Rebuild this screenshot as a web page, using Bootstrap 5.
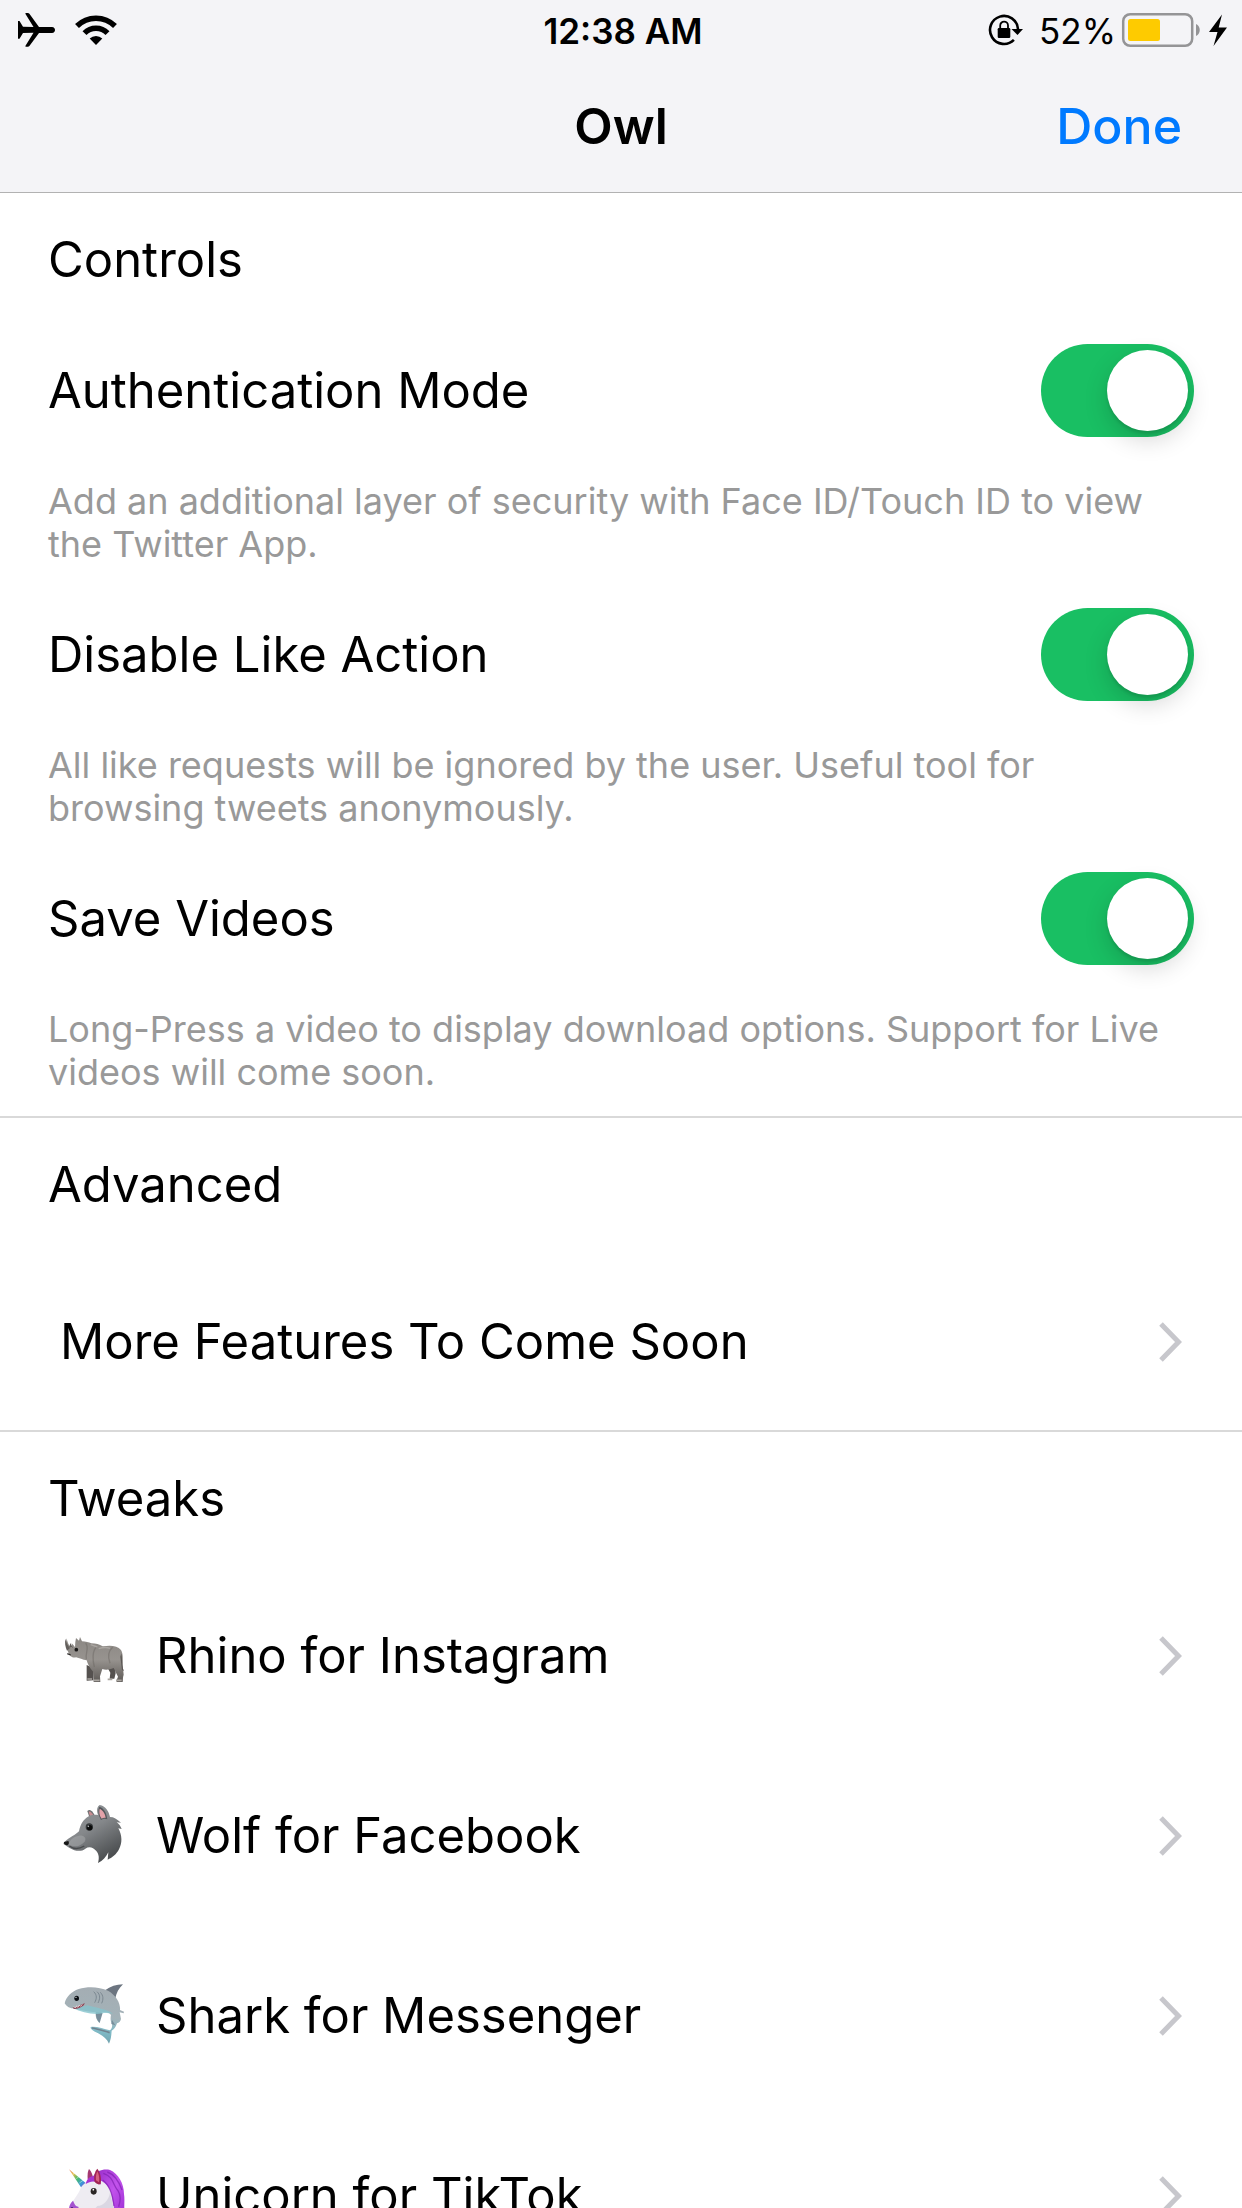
<!DOCTYPE html>
<html lang="en">
<head>
<meta charset="utf-8">
<meta name="viewport" content="width=device-width, initial-scale=1">
<title>Owl</title>
<link href="https://cdn.jsdelivr.net/npm/bootstrap@5.3.0/dist/css/bootstrap.min.css" rel="stylesheet">
<style>
  body { font-family: Inter, "Liberation Sans", sans-serif; font-size: 49px; line-height: 60px; color: #000; background: #fff; }
  svg { display: block; flex: none; }
  .top-area { background: #f4f4f7; border-bottom: 1px solid #b2b2b2; }
  .equal-side { flex: 1 1 0; }
  .status-line { padding: 0 14px 0 18px; font-size: 35px; line-height: 62px; }
  .status-time { font-weight: 600; }
  .title-line { padding: 34px 60px 36px; }
  .title-line h1, .done-btn { font-size: 50px; line-height: 60px; font-weight: 600; }
  .done-btn { font-weight: 500; color: #007aff; }
  .scroller { min-height: 0; overflow-y: auto; scrollbar-width: none; }
  .scroller::-webkit-scrollbar { display: none; }
  .group { box-shadow: inset 0 -2px #d9d9d9; }
  .group:last-child { box-shadow: none; }
  .group-title { margin: 0; font-size: 49px; line-height: 60px; font-weight: 400; padding: 37px 48px; }
  .settings { padding: 17px 48px 24px; gap: 42px; }
  .setting-note { font-size: 36px; line-height: 43px; color: #999; margin-top: 43px; }
  .form-check-input.toggle { width: 153px; height: 93px; margin: 0; border: 0; border-radius: 47px; background: #19bf63; position: relative; }
  .toggle::after { content: ""; position: absolute; top: 6px; right: 6px; width: 81px; height: 81px; border-radius: 50%; background: #fff; box-shadow: 0 9px 24px rgba(0,0,0,.16), 0 3px 3px rgba(0,0,0,.1); }
  .form-check-input.toggle:not(:checked) { background: #e5e5ea; }
  .toggle:not(:checked)::after { right: 66px; }
  .nav-row { min-height: 180px; padding: 0 60px; gap: 28px; color: #000; text-decoration: none; }
</style>
</head>
<body class="vh-100 d-flex flex-column overflow-hidden">
<svg width="0" height="0" class="position-absolute" aria-hidden="true">
  <defs>
    <symbol id="chevron" viewBox="0 0 24 40"><path d="M3 2l17.500 18L3 38" fill="none" stroke="#c7c7cc" stroke-width="5"/></symbol>
    <linearGradient id="rhinoSkin" x1="0" y1="0" x2="0" y2="1"><stop offset="0" stop-color="#8b8783"/><stop offset=".5" stop-color="#97938f"/><stop offset="1" stop-color="#5e5a57"/></linearGradient>
    <linearGradient id="wolfFur" x1="0" y1="0" x2=".6" y2="1"><stop offset="0" stop-color="#94979a"/><stop offset=".5" stop-color="#85888b"/><stop offset="1" stop-color="#4c4f51"/></linearGradient>
    <linearGradient id="sharkSkin" x1=".4" y1="0" x2=".3" y2="1"><stop offset="0" stop-color="#a4adb3"/><stop offset=".5" stop-color="#a3b2b8"/><stop offset=".75" stop-color="#80bbc7"/><stop offset="1" stop-color="#6e9ca8"/></linearGradient>
    <linearGradient id="mane" x1="0" y1="0" x2="1" y2="1"><stop offset="0" stop-color="#9328c5"/><stop offset=".5" stop-color="#c253ec"/><stop offset="1" stop-color="#9527cf"/></linearGradient>
    <linearGradient id="horn" x1="0" y1="0" x2="1" y2="1"><stop offset="0" stop-color="#f0775a"/><stop offset=".25" stop-color="#e7c04d"/><stop offset=".5" stop-color="#45b96b"/><stop offset=".75" stop-color="#3a9bd8"/><stop offset="1" stop-color="#8b3fd0"/></linearGradient>
  </defs>
</svg>

<header class="top-area flex-shrink-0">
  <div class="status-line d-flex align-items-start">
    <div class="equal-side d-flex gap-3">
      <svg width="40" height="60" viewBox="0 0 40 60" aria-label="Airplane mode" role="img"><path d="M0 21h1.500L5 26.800l10.500.3L7.500 14c-.3-.7 0-1 .8-1h1.500c.7 0 1.200.300 1.600.8L21 26.900h13c4 0 4 6 0 6H21L11.400 46c-.4.600-.9.800-1.600.800H8.300c-.8 0-1.100-.4-.8-1l8-13-10.500.2L1.500 38.700H0z"/></svg>
      <svg width="44" height="60" viewBox="68 0 44 60" aria-label="Wi-Fi" role="img"><g fill="none" stroke="#000" stroke-width="5.500"><path d="M71 26a27 27 0 0 1 38 0"/><path d="M78.500 33.200a16 16 0 0 1 23 0"/><path d="M83.700 38.500a9 9 0 0 1 12.600 0L90 45z" fill="#000" stroke="none"/></g></svg>
    </div>
    <div class="status-time">12:38 AM</div>
    <div class="equal-side d-flex justify-content-end">
      <svg width="36" height="60" viewBox="984 0 36 60" aria-label="Rotation lock" role="img"><path d="M1010.900 39.900A14 14 0 1 1 1015 29" fill="none" stroke="#000" stroke-width="2.600"/><path d="M1008.500 29h11.500l-5.500 6z"/><rect x="994.700" y="28" width="12.600" height="10" rx="1.200"/><path d="M997.200 29v-3.500a3.900 3.900 0 0 1 7.800 0V29" fill="none" stroke="#000" stroke-width="1.800"/></svg>
      <span class="ms-3 me-1">52%</span>
      <svg width="108" height="60" viewBox="1120 0 108 60" aria-label="Battery charging" role="img"><rect x="1123.200" y="14.200" width="69" height="31.600" rx="7" fill="none" stroke="#949496" stroke-width="2.500"/><rect x="1128" y="19" width="32" height="22" rx="2.500" fill="#fecb00"/><path d="M1196 24c5 2 5 10 0 12z" fill="#949496"/><path d="M1222 14.500l-13 17.500h8.500l-4 14 13.500-18.500h-8.300z"/></svg>
    </div>
  </div>
  <div class="title-line d-flex align-items-start">
    <div class="equal-side"></div>
    <h1 class="m-0">Owl</h1>
    <div class="equal-side d-flex justify-content-end"><button type="button" class="done-btn btn p-0 border-0">Done</button></div>
  </div>
</header>

<main class="scroller flex-grow-1">
  <section class="group">
    <h2 class="group-title">Controls</h2>
    <div class="settings d-flex flex-column">
      <div>
        <div class="d-flex justify-content-between align-items-center"><label for="auth">Authentication Mode</label><input class="form-check-input toggle" type="checkbox" role="switch" id="auth" aria-describedby="auth-note" checked></div>
        <p class="setting-note mb-0" id="auth-note">Add an additional layer of security with Face ID/Touch ID to view the Twitter App.</p>
      </div>
      <div>
        <div class="d-flex justify-content-between align-items-center"><label for="like">Disable Like Action</label><input class="form-check-input toggle" type="checkbox" role="switch" id="like" aria-describedby="like-note" checked></div>
        <p class="setting-note mb-0" id="like-note">All like requests will be ignored by the user. Useful tool for browsing tweets anonymously.</p>
      </div>
      <div>
        <div class="d-flex justify-content-between align-items-center"><label for="save">Save Videos</label><input class="form-check-input toggle" type="checkbox" role="switch" id="save" aria-describedby="save-note" checked></div>
        <p class="setting-note mb-0" id="save-note">Long-Press a video to display download options. Support for Live videos will come soon.</p>
      </div>
    </div>
  </section>

  <section class="group">
    <h2 class="group-title">Advanced</h2>
    <a href="#" class="nav-row d-flex align-items-center"><span class="flex-grow-1">More Features To Come Soon</span><svg width="24" height="40" aria-hidden="true"><use href="#chevron"/></svg></a>
  </section>

  <section class="group">
    <h2 class="group-title">Tweaks</h2>
    <a href="#" class="nav-row d-flex align-items-center">
      <svg width="68" height="68" viewBox="60 36 204 204" aria-hidden="true">
        <path d="M205 160l20 0 2 30-4 16h-14l2-18-8-14zM140 165l22 10-2 36-20 1z" fill="#55514f"/>
        <path d="M106 96l2-12 9 8 3-11 6 13c12 0 20 3 28 6 14 0 24 4 34 9 22-4 44-3 55 11 8 14 5 34 5 46l3 28c-3 8-2 16-3 22h-18c-2-6 2-10 4-16l-13-26c-14 6-26 6-34 3l-7 22 1 17h-20l-1-30c-12-14-17-24-20-35-12-2-22-6-32-9-8 2-16-2-20-8l-5-12c-4-10-7-22-3-37 3 16 8 24 16 29l-1-14c4 4 8 8 10 12z" fill="url(#rhinoSkin)"/>
        <path d="M81 122c-5-12-8-24-4-36 2 15 8 22 13 28zM88 111l3-12 8 15z" fill="#625e5b"/>
        <path d="M137 100c12 12-2 28 2 48M170 111c-14 10-12 42-7 60M218 112c-16 14-14 32-8 48" fill="none" stroke="#68635f" stroke-width="4" opacity=".45"/>
        <path d="M176 116c16-5 26-4 34-1M152 104l20 7" fill="none" stroke="#b5b1ad" stroke-width="4" opacity=".7"/>
        <path d="M244 130c3 14 2 32 5 46l3 7-6-3-5-40z" fill="#5b5754"/>
        <circle cx="109" cy="119" r="5.500" fill="#191817"/><path d="M82 131l10 4" stroke="#292726" stroke-width="4"/><path d="M161 211h18M228 211h17M142 207h14M203 208h14" stroke="#aba7a2" stroke-width="5"/>
      </svg>
      <span class="flex-grow-1">Rhino for Instagram</span><svg width="24" height="40" aria-hidden="true"><use href="#chevron"/></svg>
    </a>
    <a href="#" class="nav-row d-flex align-items-center">
      <svg width="68" height="68" viewBox="60 51 204 204" aria-hidden="true">
        <path d="M142 78c8-8 16 0 22 13l-16 6z" fill="#6b6e70"/><path d="M146 80c6-2 10 4 14 11l-10 3z" fill="#c98d92"/>
        <path d="M74 170c16-14 32-20 43-31 4-20 13-36 29-45 10-5 20-5 28-4-5-14-3-25 5-30 18 3 27 19 31 36 12 0 20 6 33 17l-13-1c6 4 12 12 15 20l-10-2c12 22 12 44 2 63-7 14-21 26-34 31l2-22c-7 14-16 26-31 32 4-15 3-26-5-36-10-12-22-15-33-7-8 7-20 8-33 5-12-5-20-11-29-17-5-2-4-6 0-9z" fill="url(#wolfFur)"/>
        <path d="M178 65c15 5 22 20 24 38-6-3-12-3-19 2-8-14-10-28-5-40z" fill="#53575a"/><path d="M179 71c11 5 17 17 18 28-4-1-9 0-12 2-8-10-8-21-6-30z" fill="#e2a2a9"/>
        <path d="M84 178c15 9 35 9 50-8 7-12-4-20-17-18-16 3-25 10-33 26z" fill="#a9abad" opacity=".5"/>
        <path d="M88 183c13 10 30 9 45 0" fill="none" stroke="#494b4d" stroke-width="4"/>
        <path d="M72 171l13-3c3 5 2 11-3 13-7-1-12-5-10-10z" fill="#151616"/>
        <circle cx="148" cy="126" r="11" fill="#34383a"/><circle cx="149" cy="128" r="8" fill="#090a0a"/><circle cx="145" cy="124" r="2.500" fill="#b8bcc0"/>
      </svg>
      <span class="flex-grow-1">Wolf for Facebook</span><svg width="24" height="40" aria-hidden="true"><use href="#chevron"/></svg>
    </a>
    <a href="#" class="nav-row d-flex align-items-center">
      <svg width="68" height="68" viewBox="60 51 204 204" aria-hidden="true">
        <path d="M195 76c16-12 34-18 54-18-13 12-20 26-23 42z" fill="#6c7580"/>
        <path d="M74 115c4-19 20-35 42-43 30-9 63-6 88 5 26 15 38 39 36 58l12 5-1 5-12-3 4 20c-2 8-6 11-12 13-4 12-9 18-16 22-1 14-2 26-8 39-6-14-16-22-30-30-10-5-18-9-24-15-3-4-1-6 5-6 17 0 35 6 52 11 7-7 7-14 6-20-5-8-5-17-3-26-7-8-17-10-28-8-4 12-7 21-7 32-9-9-12-19-11-32-20-2-41-6-59-11-12 0-24-1-34-16z" fill="url(#sharkSkin)"/>
        <path d="M168 142l20 1-9 31c-9-9-12-19-11-32zM216 165l10 16-12-4z" fill="#788e9b"/>
        <path d="M98 129c16 2 32-6 45-8 26 8 56 11 76 25-16-4-30-2-48 1-28-1-50-7-73-18z" fill="#86c4cd" opacity=".8"/>
        <path d="M156 189c16 2 34 9 53 14" fill="none" stroke="#71828f" stroke-width="5"/>
        <path d="M97 128c16-1 24-10 38-13-6 11-17 16-32 17z" fill="#8c3f4f"/><path d="M102 125l4 4 4-6 4 4 4-7 4 4 5-6" fill="none" stroke="#fff" stroke-width="2"/>
        <path d="M161 80c11 10 9 22 3 33M171 80c11 10 9 22 3 34M181 82c10 10 9 22 4 33" fill="none" stroke="#727f89" stroke-width="2.500"/>
        <ellipse cx="110" cy="100" rx="7" ry="8" fill="#0c1015"/><circle cx="108" cy="97" r="2" fill="#e5eef2"/>
      </svg>
      <span class="flex-grow-1">Shark for Messenger</span><svg width="24" height="40" aria-hidden="true"><use href="#chevron"/></svg>
    </a>
    <a href="#" class="nav-row d-flex align-items-center">
      <svg width="68" height="68" viewBox="0 0 204 204" aria-hidden="true">
        <path d="M100 42c10-16 30-22 50-18 24 10 42 40 42 72 3 20-1 38 2 52-8 24-22 36-42 40l-22-90z" fill="url(#mane)"/>
        <path d="M27 22l51 42-14 13z" fill="url(#horn)"/><path d="M39 37l7-6M49 50l9-7M58 63l11-8" stroke="#fff" stroke-width="2" opacity=".7"/>
        <path d="M83 52c-1-14 0-24 4-31 8 8 11 18 12 28z" fill="#a33870"/>
        <path d="M62 78c12-18 33-29 57-24 23 10 36 32 38 58l14 70H82l12-34c-15 3-27 8-39 10-16 4-29-4-27-20 6-20 26-36 34-60z" fill="#eeecf2"/>
        <path d="M112 132c18 0 34-18 38-40 8 30 14 60 20 90H86l14-36z" fill="#cdc9d8" opacity=".6"/>
        <path d="M39 116c-8 8-14 18-11 30 6 14 20 13 31 6l-4-18c-8 0-12-9-16-18z" fill="#a452cf"/><ellipse cx="36" cy="140" rx="4" ry="5" fill="#43216b"/>
        <path d="M77 66c4-20 19-28 37-24 8 7 9 18 7 26-14-13-28-12-44-2z" fill="#a735d2"/>
        <path d="M103 58c-2-17 1-30 9-38 9 12 13 28 10 46-7 3-14 0-19-8z" fill="#a12655"/><path d="M108 55c-1-10 0-20 4-27 5 10 7 22 5 33z" fill="#d66380"/>
        <path d="M130 34c32 10 28 36 44 52 10 16 8 30 2 48M142 30c24 8 36 32 44 54M128 54c22 16 30 44 34 78" fill="none" stroke="#7d1fae" stroke-width="4" opacity=".65"/>
        <ellipse cx="101" cy="88" rx="9" ry="10" fill="#2a2525"/><circle cx="100" cy="83" r="2.500" fill="#fff"/>
      </svg>
      <span class="flex-grow-1">Unicorn for TikTok</span><svg width="24" height="40" aria-hidden="true"><use href="#chevron"/></svg>
    </a>
  </section>
</main>
<script src="https://cdn.jsdelivr.net/npm/bootstrap@5.3.0/dist/js/bootstrap.bundle.min.js"></script>
</body>
</html>
